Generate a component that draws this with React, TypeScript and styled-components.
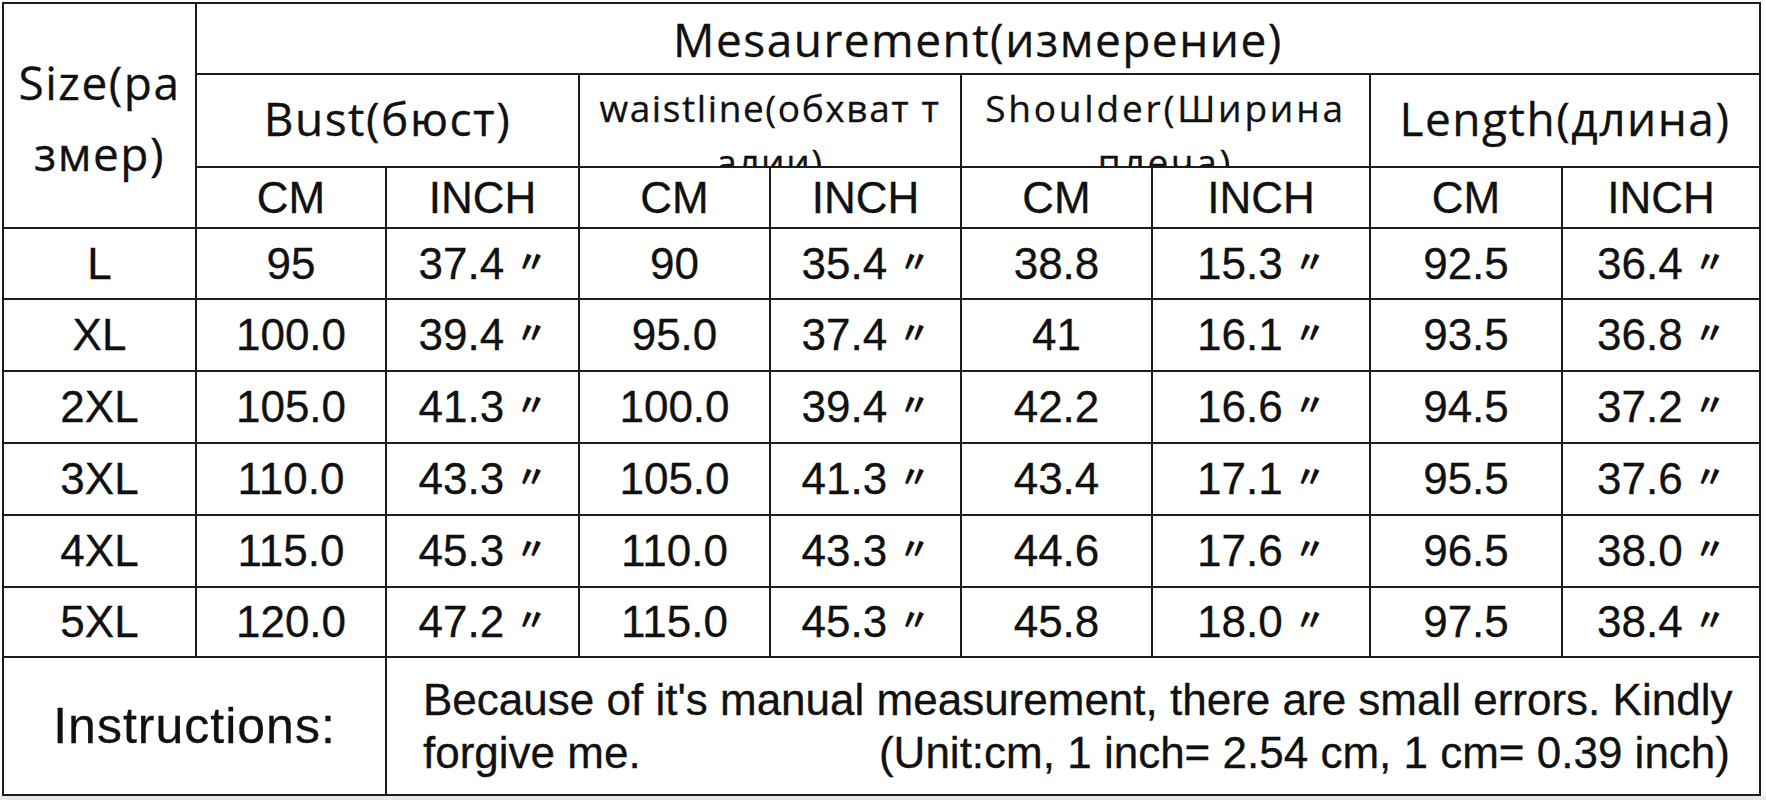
import React from "react";
import styled, { createGlobalStyle } from "styled-components";

const GlobalStyle = createGlobalStyle`
  html, body {
    margin: 0;
    padding: 0;
    background: #e6e9e4;
  }
`;

const Page = styled.div`
  width: 1766px;
  height: 796px;
  box-sizing: border-box;
  padding: 2px 0 0 2px;
  background: #fff;
`;

const Sheet = styled.div`
  display: grid;
  grid-template-columns: 191px 188px 191px 189px 189px 189px 216px 190px 196px;
  grid-template-rows: 69px 91px 59px 69px 70px 70px 70px 70px 68px 136px;
  gap: 2px;
  padding: 2px;
  width: max-content;
  background: #1c1c1c;
  color: #111;
  -webkit-text-stroke: 0.3px #111;
`;

const Cell = styled.div<{ $col?: string; $row?: string; $top?: boolean }>`
  grid-column: ${(p) => p.$col ?? "auto"};
  grid-row: ${(p) => p.$row ?? "auto"};
  display: flex;
  flex-direction: column;
  align-items: center;
  justify-content: ${(p) => (p.$top ? "flex-start" : "center")};
  overflow: hidden;
  min-width: 0;
  background: #fff;
`;

const Title = styled.div<{ $shift?: number }>`
  font-family: "Open Sans", "Noto Sans", sans-serif;
  font-size: 46px;
  letter-spacing: 1.5px;
  white-space: nowrap;
  transform: translateY(${(p) => p.$shift ?? 0}px);
`;

const StackedTitle = styled(Title)`
  line-height: 71px;
  text-align: center;
`;

const SubTitle = styled.div<{ $track: number }>`
  padding-top: 6px;
  font-family: "Open Sans", "Noto Sans", sans-serif;
  font-size: 37px;
  line-height: 54px;
  letter-spacing: ${(p) => p.$track}px;
  white-space: nowrap;
  text-align: center;
`;

const Value = styled.div`
  font-family: "Liberation Sans", Arial, sans-serif;
  font-size: 44px;
  white-space: nowrap;
`;

const Ditto = styled.span`
  font-family: "Noto Sans CJK SC", "Noto Sans CJK JP", sans-serif;
  font-size: 30px;
  font-weight: 700;
  line-height: 0;
  vertical-align: 0.24em;
`;

const Label = styled.div`
  font-family: "Liberation Sans", Arial, sans-serif;
  font-size: 50px;
  letter-spacing: 1px;
  white-space: nowrap;
`;

const Note = styled.div`
  align-self: stretch;
  padding: 0 29px 0 36px;
  font-family: "Liberation Sans", Arial, sans-serif;
  font-size: 44px;
  line-height: 53px;
  white-space: nowrap;
`;

const NoteLine = styled.div`
  display: flex;
  justify-content: space-between;
`;

type Group = { lines: string[]; track?: number };

const groups: Group[] = [
  { lines: ["Bust(бюст)"] },
  { lines: ["waistline(обхват т", "алии)"], track: 1.6 },
  { lines: ["Shoulder(Ширина", "плеча)"], track: 2.8 },
  { lines: ["Length(длина)"] },
];

const rows: [string, string, string, string, string, string, string, string, string][] = [
  ["L", "95", "37.4", "90", "35.4", "38.8", "15.3", "92.5", "36.4"],
  ["XL", "100.0", "39.4", "95.0", "37.4", "41", "16.1", "93.5", "36.8"],
  ["2XL", "105.0", "41.3", "100.0", "39.4", "42.2", "16.6", "94.5", "37.2"],
  ["3XL", "110.0", "43.3", "105.0", "41.3", "43.4", "17.1", "95.5", "37.6"],
  ["4XL", "115.0", "45.3", "110.0", "43.3", "44.6", "17.6", "96.5", "38.0"],
  ["5XL", "120.0", "47.2", "115.0", "45.3", "45.8", "18.0", "97.5", "38.4"],
];

const Inch = ({ value }: { value: string }) => (
  <Value>
    {value} <Ditto>〃</Ditto>
  </Value>
);

const SizeChart: React.FC = () => {
  return (
    <Sheet>
      <Cell $col="1" $row="1 / span 3">
        <StackedTitle $shift={2}>
          Size(ра
          <br />
          змер)
        </StackedTitle>
      </Cell>
      <Cell $col="2 / span 8" $row="1">
        <Title>Mesaurement(измерение)</Title>
      </Cell>

      {groups.map((g, i) =>
        g.lines.length > 1 ? (
          <Cell key={g.lines[0]} $col={`${2 + i * 2} / span 2`} $row="2" $top>
            <SubTitle $track={g.track ?? 0}>
              {g.lines.map((l) => (
                <div key={l}>{l}</div>
              ))}
            </SubTitle>
          </Cell>
        ) : (
          <Cell key={g.lines[0]} $col={`${2 + i * 2} / span 2`} $row="2">
            <Title $shift={-3}>{g.lines[0]}</Title>
          </Cell>
        )
      )}

      {groups.map((g) => (
        <React.Fragment key={`u-${g.lines[0]}`}>
          <Cell>
            <Value>CM</Value>
          </Cell>
          <Cell>
            <Value>INCH</Value>
          </Cell>
        </React.Fragment>
      ))}

      {rows.map((r) => (
        <React.Fragment key={r[0]}>
          <Cell>
            <Value>{r[0]}</Value>
          </Cell>
          {r.slice(1).map((v, i) => (
            <Cell key={i}>{i % 2 === 0 ? <Value>{v}</Value> : <Inch value={v} />}</Cell>
          ))}
        </React.Fragment>
      ))}

      <Cell $col="1 / span 2" $row="10">
        <Label>Instructions:</Label>
      </Cell>
      <Cell $col="3 / span 7" $row="10">
        <Note>
          <div>Because of it's manual measurement, there are small errors. Kindly</div>
          <NoteLine>
            <span>forgive me.</span>
            <span>(Unit:cm, 1 inch= 2.54 cm, 1 cm= 0.39 inch)</span>
          </NoteLine>
        </Note>
      </Cell>
    </Sheet>
  );
};

export default function App() {
  return (
    <>
      <GlobalStyle />
      <Page>
        <SizeChart />
      </Page>
    </>
  );
}
